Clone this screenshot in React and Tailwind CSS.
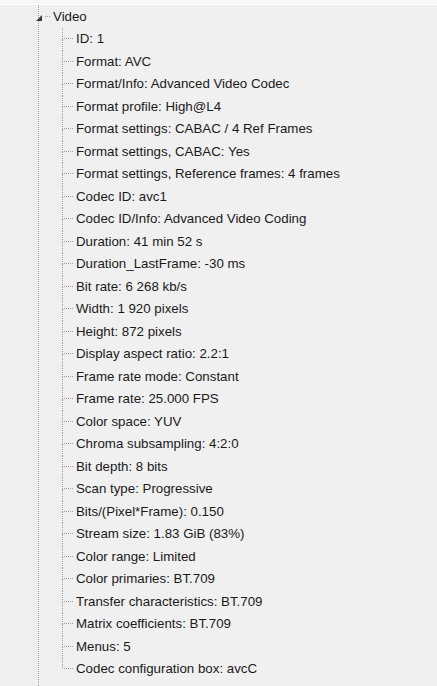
const items = [
  'ID: 1',
  'Format: AVC',
  'Format/Info: Advanced Video Codec',
  'Format profile: High@L4',
  'Format settings: CABAC / 4 Ref Frames',
  'Format settings, CABAC: Yes',
  'Format settings, Reference frames: 4 frames',
  'Codec ID: avc1',
  'Codec ID/Info: Advanced Video Coding',
  'Duration: 41 min 52 s',
  'Duration_LastFrame: -30 ms',
  'Bit rate: 6 268 kb/s',
  'Width: 1 920 pixels',
  'Height: 872 pixels',
  'Display aspect ratio: 2.2:1',
  'Frame rate mode: Constant',
  'Frame rate: 25.000 FPS',
  'Color space: YUV',
  'Chroma subsampling: 4:2:0',
  'Bit depth: 8 bits',
  'Scan type: Progressive',
  'Bits/(Pixel*Frame): 0.150',
  'Stream size: 1.83 GiB (83%)',
  'Color range: Limited',
  'Color primaries: BT.709',
  'Transfer characteristics: BT.709',
  'Matrix coefficients: BT.709',
  'Menus: 5',
  'Codec configuration box: avcC',
];

const Leaf = ({ text, last }) => (
  <div className="flex h-[22.5px]">
    {/* tree connector */}
    <div className="flex flex-col w-[11px] shrink-0">
      <div className="h-1/2 border-l border-b border-dotted border-[#a0a0a0]"></div>
      <div className={last ? 'h-1/2' : 'h-1/2 border-l border-dotted border-[#a0a0a0]'}></div>
    </div>
    <span className="ml-[3px] leading-[22.5px] whitespace-nowrap">{text}</span>
  </div>
);

const App = () => {
  return (
    <div
      className="w-[437px] h-[686px] bg-[#f0f0f0] overflow-hidden flex flex-col text-[13.3px] text-[#1a1a1a]"
      style={{ fontFamily: '"Liberation Sans", Arial, sans-serif' }}
    >
      {/* cut-off row above */}
      <div className="h-[5px] bg-[#f6f6f6] border-b border-white shrink-0"></div>

      <div className="flex-1 ml-[38px] border-l border-dotted border-[#a0a0a0]">
        {/* Video node */}
        <div className="flex items-center h-[23px] -ml-[3px]">
          <svg width="6" height="6" viewBox="0 0 6 6" className="shrink-0 mt-[2px]">
            <polygon points="6,0 6,6 0,6" fill="#3c3c3c" />
          </svg>
          <div className="w-[5px] ml-[3px] border-t border-dotted border-[#a0a0a0]"></div>
          <span className="ml-[3px] leading-[23px]">Video</span>
        </div>

        <div className="ml-[23px]">
          {items.map((t, i) => (
            <Leaf key={i} text={t} last={i === items.length - 1} />
          ))}
        </div>
      </div>
    </div>
  );
};

export default App;
